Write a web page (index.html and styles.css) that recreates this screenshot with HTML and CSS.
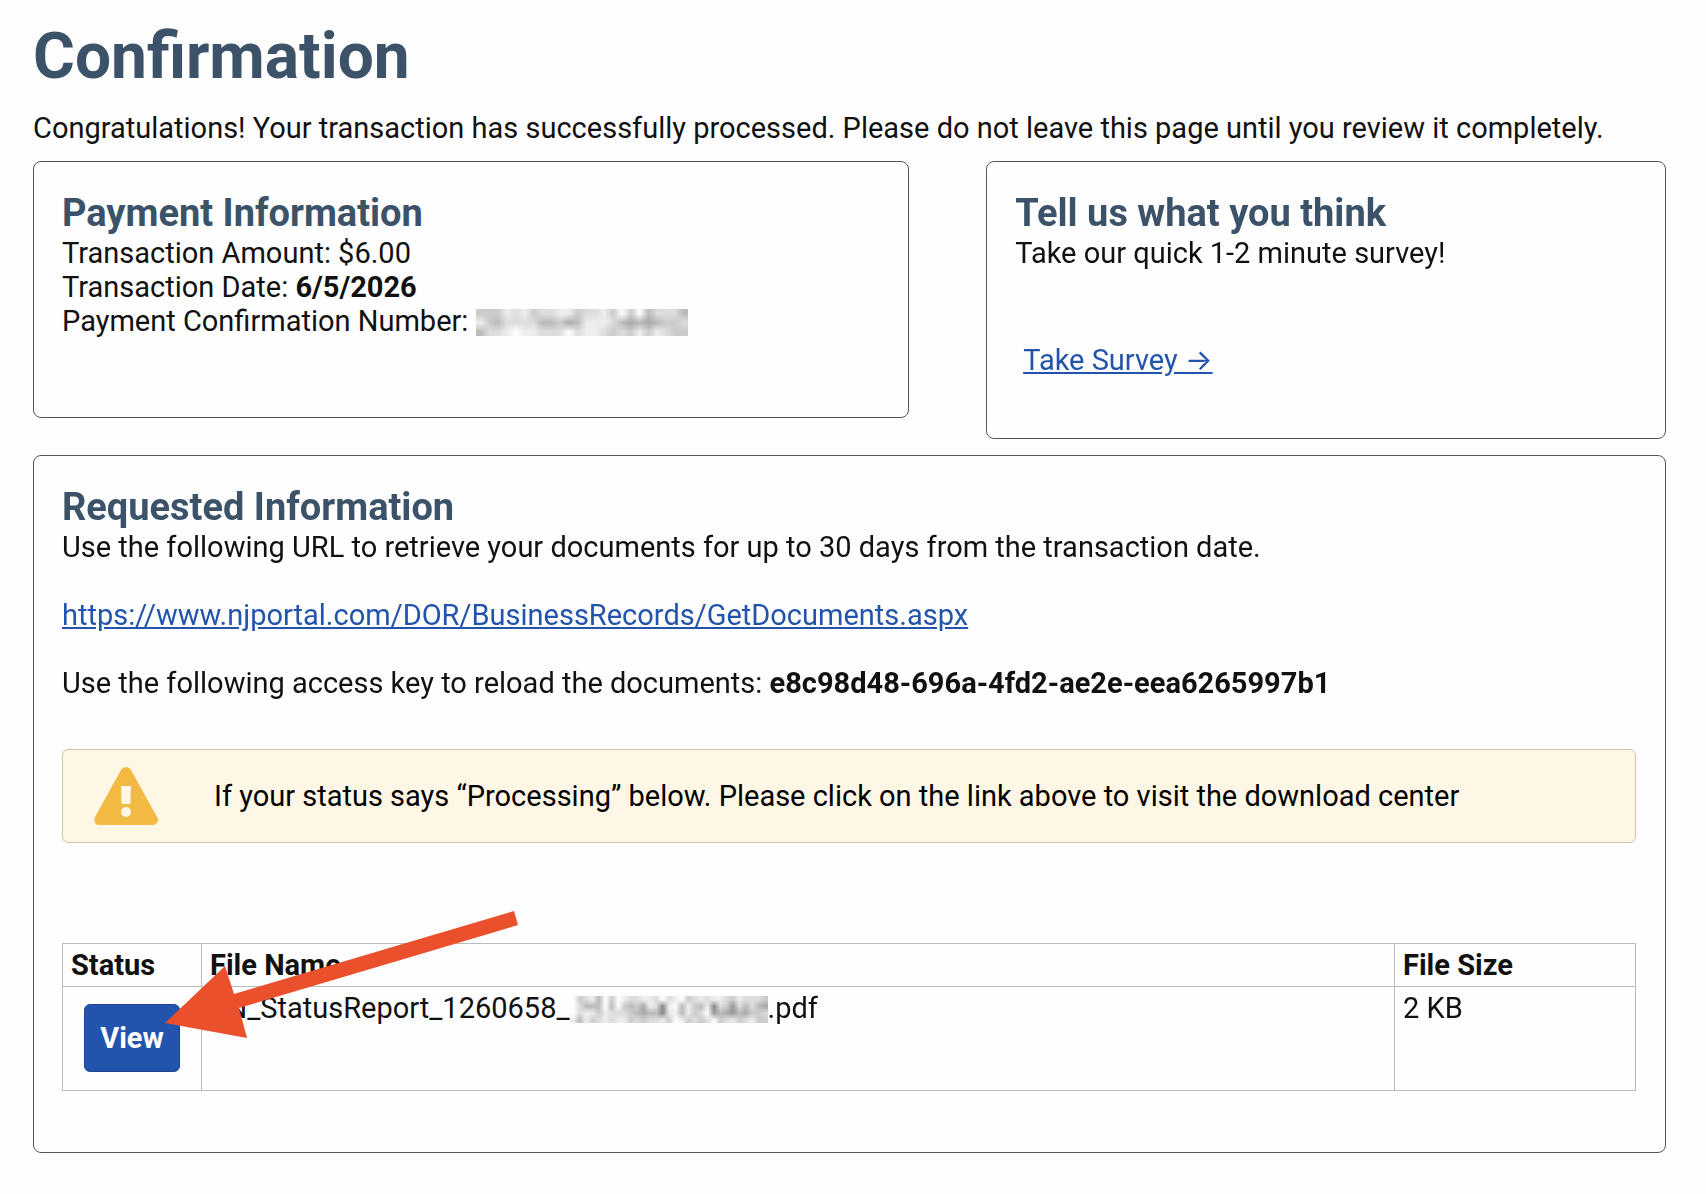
FILE: index.html
```html
<!DOCTYPE html>
<html lang="en">
<head>
    <meta charset="UTF-8">
    <meta name="viewport" content="width=device-width, initial-scale=1.0">
    <title>Confirmation</title>
    <link rel="stylesheet" href="styles.css">
</head>
<body>
    <main class="container">
        <h1>Confirmation</h1>
        <p class="intro">Congratulations! Your transaction has successfully processed. Please do not leave this page until you review it completely.</p>

        <div class="cards">
            <section class="card payment">
                <h2>Payment Information</h2>
                <p>Transaction Amount: $6.00</p>
                <p>Transaction Date: <strong>6/5/2026</strong></p>
                <p>Payment Confirmation Number: <canvas class="redacted redacted-number" id="confirmationNumber"></canvas></p>
            </section>

            <section class="card survey">
                <h2>Tell us what you think</h2>
                <p>Take our quick 1-2 minute survey!</p>
                <a class="survey-link" href="#">Take Survey <span class="link-arrow">→</span></a>
            </section>
        </div>

        <section class="card requested">
            <h2>Requested Information</h2>
            <p>Use the following URL to retrieve your documents for up to 30 days from the transaction date.</p>
            <p class="spaced"><a href="https://www.njportal.com/DOR/BusinessRecords/GetDocuments.aspx">https://www.njportal.com/DOR/BusinessRecords/GetDocuments.aspx</a></p>
            <p class="spaced">Use the following access key to reload the documents: <strong>e8c98d48-696a-4fd2-ae2e-eea6265997b1</strong></p>

            <div class="alert">
                <svg class="alert-icon" width="64" height="58" viewBox="0 0 64 58">
                    <path fill="#f2b943" d="M27 3Q29 0 32 0T37 3L63 50Q65 53 63 55.500T59 58H5Q2 58 1 55.500T1 50Z"/>
                    <path fill="#fef7e5" d="M27 19H37L36.500 37H27.500Z"/>
                    <circle fill="#fef7e5" cx="32" cy="45" r="5"/>
                </svg>
                <p>If your status says “Processing” below. Please click on the link above to visit the download center</p>
            </div>

            <div class="files">
                <table>
                    <thead>
                        <tr>
                            <th class="col-status">Status</th>
                            <th>File Name</th>
                            <th class="col-size">File Size</th>
                        </tr>
                    </thead>
                    <tbody>
                        <tr>
                            <td><button class="view-button" type="button">View</button></td>
                            <td>EN_StatusReport_1260658_<canvas class="redacted redacted-file" id="fileNumber"></canvas>.pdf</td>
                            <td>2 KB</td>
                        </tr>
                    </tbody>
                </table>
                <svg class="arrow" width="353" height="127" viewBox="0 0 353 127">
                    <polygon fill="#eb502c" points="0,112 60,55 69,83 349,0 353,14 74,97 82,127"/>
                </svg>
            </div>
        </section>
    </main>

    <script>
        // Each character is the grey level of one block, the browser smooths them when scaling up
        function drawMosaic(id, rows) {
            const canvas = document.getElementById(id);
            canvas.width = rows[0].length;
            canvas.height = rows.length;
            const ctx = canvas.getContext('2d');
            rows.forEach((row, y) => {
                [...row].forEach((shade, x) => {
                    ctx.fillStyle = '#' + shade.repeat(3);
                    ctx.fillRect(x, y, 1, 1);
                });
            });
        }

        drawMosaic('confirmationNumber', [
            'cccedecddeecddecfcfbdddb',
            'ecbddddbbcabeeedbababccd',
            'bddefeedddfdeedcdcecedcc'
        ]);

        drawMosaic('fileNumber', [
            'fcdebfcfeddeedfdefcdedeedcedddc',
            'fdbbbfbfcbcaed8efbecbe8dc9dbdba',
            'fdeecedddcbabb8eebecdf9ba9baccd',
            'ebecdedeecdcddecfecdcdfcdecdecc'
        ]);
    </script>
</body>
</html>
```
FILE: styles.css
```css
* {
    margin: 0;
    padding: 0;
    box-sizing: border-box;
}

body {
    font-family: Roboto, 'Helvetica Neue', Arial, sans-serif;
    font-size: 29px;
    line-height: 34px;
    color: #111;
    background: #fefefe;
}

.container {
    padding: 21px 40px 40px 33px;
}

h1 {
    font-size: 64px;
    line-height: 72px;
    font-weight: 700;
    color: #3b5268;
}

h2 {
    font-size: 38px;
    line-height: 46px;
    font-weight: 700;
    color: #3b5268;
}

a {
    color: #2354ad;
}

.intro {
    margin: 18px 0 16px;
}

.cards {
    display: grid;
    grid-template-columns: 58fr 45fr;
    align-items: start;
    column-gap: 77px;
    margin-bottom: 16px;
}

.card {
    border: 1px solid #555;
    border-radius: 8px;
    padding: 28px 29px 28px 28px;
}

.payment {
    padding-bottom: 79px;
}

.survey {
    padding-bottom: 61px;
}

.survey-link {
    display: inline-block;
    margin: 73px 0 0 8px;
}

.link-arrow {
    font-family: Inter, sans-serif;
    line-height: 1;
}

.requested {
    padding-bottom: 61px;
}

.spaced {
    margin-top: 34px;
}

.alert {
    display: flex;
    align-items: center;
    gap: 56px;
    min-height: 94px;
    margin: 49px 0 100px;
    padding: 17px 31px;
    color: #000;
    background: #fef7e5;
    border: 1px solid #cfc5a9;
    border-radius: 6px;
}

.alert-icon {
    flex-shrink: 0;
}

.files {
    position: relative;
}

table {
    width: 100%;
    border-collapse: collapse;
}

th,
td {
    padding: 4px 8px;
    border: 1px solid #bbb;
    text-align: left;
    vertical-align: top;
}

.col-status {
    width: 139px;
}

.col-size {
    width: 241px;
}

.view-button {
    display: block;
    width: 96px;
    height: 68px;
    margin: 13px 13px 14px;
    font: inherit;
    font-weight: 700;
    color: #fff;
    background: #2354ad;
    border: 1px solid #1d4790;
    border-radius: 6px;
}

.redacted {
    height: 27px;
    vertical-align: -5px;
}

.redacted-number {
    width: 212px;
}

.redacted-file {
    width: 198px;
}

.arrow {
    position: absolute;
    top: -32px;
    left: 103px;
}
```
